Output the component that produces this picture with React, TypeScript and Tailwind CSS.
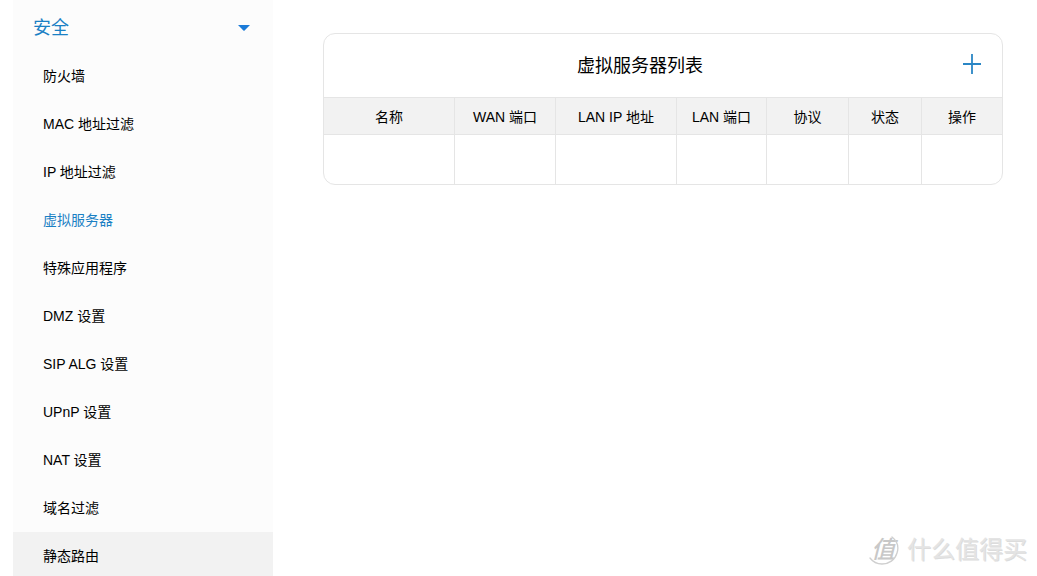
import { useState } from "react"

const menuItems = [
  "防火墙",
  "MAC 地址过滤",
  "IP 地址过滤",
  "虚拟服务器",
  "特殊应用程序",
  "DMZ 设置",
  "SIP ALG 设置",
  "UPnP 设置",
  "NAT 设置",
  "域名过滤",
  "静态路由",
]

const columns = [
  { name: "名称", width: "w-[131px]" },
  { name: "WAN 端口", width: "w-[101px]" },
  { name: "LAN IP 地址", width: "w-[121px]" },
  { name: "LAN 端口", width: "w-[90px]" },
  { name: "协议", width: "w-[82px]" },
  { name: "状态", width: "w-[73px]" },
  { name: "操作", width: "w-[80px]" },
]

const Sidebar = () => {
  const [open, setOpen] = useState(true)

  const getItemStyle = (name: string) => {
    if (name === "虚拟服务器") return "text-[#1a80c4]"
    if (name === "静态路由") return "bg-[#f2f2f2] text-black"
    return "text-black hover:bg-[#f2f2f2]"
  }

  return (
    <nav className="w-[260px] shrink-0 bg-[#fcfcfc] pt-1">
      <button
        type="button"
        aria-expanded={open}
        onClick={() => setOpen(!open)}
        className="flex h-12 w-full items-center justify-between pr-[23px] pl-5 text-lg text-[#1a80c4]"
      >
        安全
        <svg width="12" height="6" viewBox="0 0 12 6" fill="#1b7bd8" aria-hidden="true">
          <path d="M0 0h12L6.6 5.6a.9.9 0 0 1-1.2 0z" />
        </svg>
      </button>
      {open && (
        <ul>
          {menuItems.map((name) => (
            <li key={name}>
              <a href="#" className={`flex h-12 items-center pl-[30px] text-sm ${getItemStyle(name)}`}>
                {name}
              </a>
            </li>
          ))}
        </ul>
      )}
    </nav>
  )
}

const ServerList = () => (
  <section className="overflow-hidden rounded-xl border border-[#e5e5e5] bg-white">
    <div className="flex h-[63px] items-center pr-5">
      <h1 className="flex-1 text-center text-lg">虚拟服务器列表</h1>
      <button type="button" aria-label="添加" className="pb-1 pl-1.5">
        <svg width="20" height="20" viewBox="0 0 20 20" stroke="#2a86c5" strokeWidth="1.8" aria-hidden="true">
          <path d="M10 0v20M1 10h18" />
        </svg>
      </button>
    </div>
    <table className="w-full table-fixed border-separate border-spacing-0 text-sm">
      <thead>
        <tr className="h-[38px] bg-[#f2f2f2]">
          {columns.map((col) => (
            <th
              key={col.name}
              className={`border-y border-r border-[#e5e5e5] p-0 pt-0.5 font-normal last:border-r-0 ${col.width}`}
            >
              {col.name}
            </th>
          ))}
        </tr>
      </thead>
      <tbody>
        <tr className="h-[49px]">
          {columns.map((col) => (
            <td key={col.name} className="border-r border-[#e5e5e5] last:border-r-0" />
          ))}
        </tr>
      </tbody>
    </table>
  </section>
)

const Watermark = () => (
  <div className="pointer-events-none absolute right-2.5 bottom-2.5 flex items-center gap-2">
    <div className="relative flex size-8 items-center justify-center">
      <svg className="absolute inset-0" width="32" height="32" viewBox="0 0 32 32" fill="none" aria-hidden="true">
        <path
          d="M25 3C30 7 32 13 30 19C28 26 22 30 15 30C10 30 6 28 3 24"
          stroke="#cfcfcf"
          strokeWidth="1.3"
          strokeLinecap="round"
        />
      </svg>
      <span className="text-2xl leading-8 font-medium text-[#c8c8c8] italic">值</span>
    </div>
    <span className="text-2xl leading-8 text-[#e4e4e4] [text-shadow:1px_1px_0_#dcdcdc]">什么值得买</span>
  </div>
)

export default function App() {
  return (
    <div className="relative flex h-screen overflow-hidden bg-white pl-[13px] font-['Liberation_Sans','Noto_Sans_CJK_SC',sans-serif] text-black">
      <Sidebar />
      <main className="min-w-0 flex-1 pt-[33px] pr-[34px] pl-[50px]">
        <ServerList />
      </main>
      <Watermark />
    </div>
  )
}
